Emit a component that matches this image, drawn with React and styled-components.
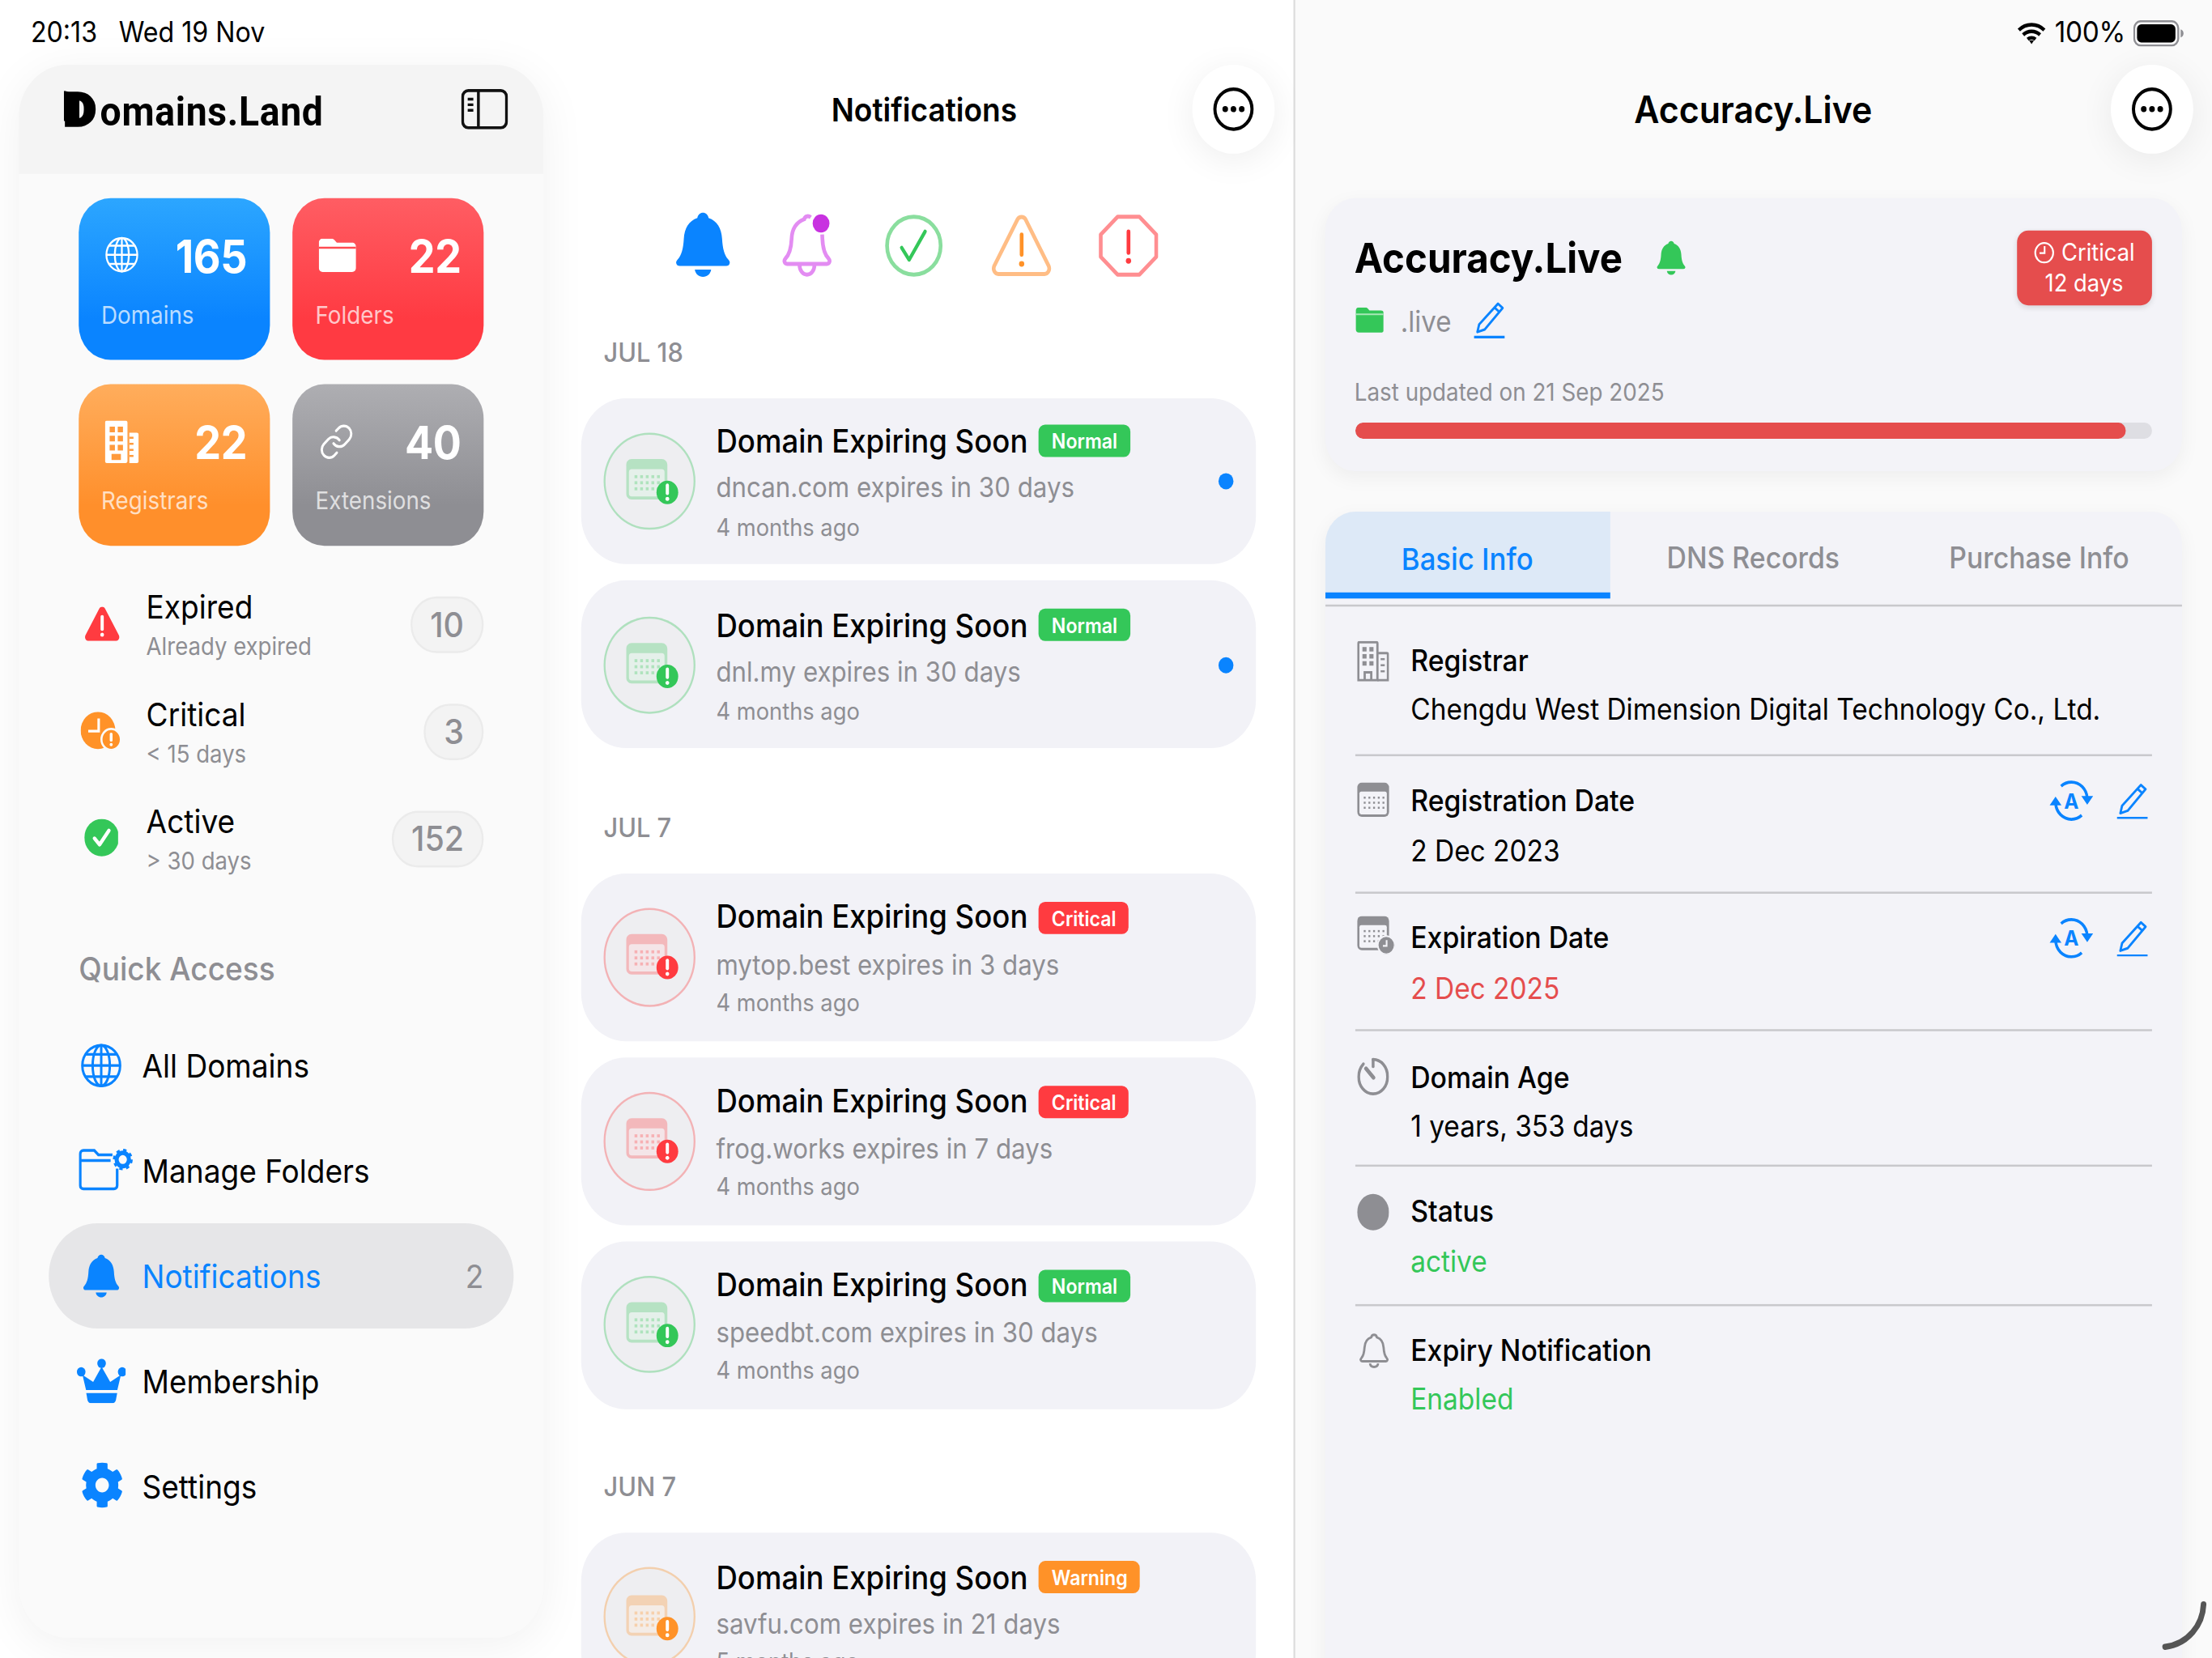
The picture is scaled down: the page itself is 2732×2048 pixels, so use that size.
import React from "react";
import styled, { createGlobalStyle } from "styled-components";
import { FaCog } from "react-icons/fa";
import { Link as LinkIcon } from "lucide-react";

const Global = createGlobalStyle`
  html, body { margin: 0; padding: 0; width: 2732px; height: 2048px; overflow: hidden; background: #fff; }
  * { box-sizing: border-box; }
  svg { flex-shrink: 0; }
  body { font-family: Inter, "Noto Sans", "Liberation Sans", sans-serif; color: #000; }
`;

const BLUE = "#0a84ff";
const GRAY = "#8e8e93";
const TONES = { Normal: "#34c759", Critical: "#ff3b40", Warning: "#ff9228" };

/* the capture is a 1180x820 point iPad window stretched to the full frame */
const Stage = styled.div`
  position: relative;
  width: 1180px;
  height: 820px;
  overflow: hidden;
  display: flex;
  background: #fff;
  transform: scale(2.31525, 2.49756);
  transform-origin: 0 0;
`;

const StatusBar = styled.div`
  position: absolute;
  inset: 0 0 auto 0;
  height: 32px;
  padding: 0 15px 0 16.4px;
  display: flex;
  align-items: center;
  justify-content: space-between;
  font-size: 13.9px;
  z-index: 5;
`;
const StatusGroup = styled.div`
  display: flex;
  align-items: center;
  gap: ${(p) => p.$gap || 12}px;
`;
const BatteryText = styled.span`
  margin-top: -1.2px;
  font-size: 14.4px;
  letter-spacing: -0.1px;
`;

const Side = styled.div`
  width: 290px;
  flex-shrink: 0;
  padding: 32px 0 10px 10px;
  display: flex;
`;
const Panel = styled.aside`
  flex: 1;
  background: #fafafa;
  border-radius: 26px;
  box-shadow: 0 4px 24px rgba(0, 0, 0, 0.06);
  overflow: hidden;
`;
const PanelHead = styled.div`
  height: 54px;
  padding: 0 19px 10px 24px;
  background: #f4f4f4;
  display: flex;
  align-items: center;
  justify-content: space-between;
`;
const Logo = styled.div`
  display: flex;
  align-items: baseline;
  font-family: Roboto, "Liberation Sans", sans-serif;
  font-weight: 700;
  font-size: 20px;
  letter-spacing: 0.3px;
`;
const LogoD = styled.span`
  position: relative;
  display: inline-block;
  width: 19.4px;
  font-weight: 900;
  font-size: 22px;
  -webkit-text-stroke: 1.4px #000;
  transform: scaleX(1.2);
  transform-origin: left center;
  &::before {
    content: "";
    position: absolute;
    left: 0;
    top: 3px;
    width: 7px;
    height: 15.5px;
    background: #000;
    clip-path: polygon(0 0, 100% 22%, 100% 100%, 0 100%);
  }
`;

const StatGrid = styled.div`
  margin: 12px 32px 0;
  display: grid;
  grid-template-columns: 1fr 1fr;
  gap: 12px 12.5px;
`;
const StatCard = styled.div`
  height: 80px;
  padding: 16.3px 12px 0;
  border-radius: 17px;
  color: #fff;
  background: linear-gradient(180deg, ${(p) => p.$from}, ${(p) => p.$to} 75%);
`;
const StatTop = styled.div`
  height: 24px;
  padding-left: 2px;
  display: flex;
  align-items: center;
  justify-content: space-between;
`;
const StatValue = styled.div`
  font-size: 22.5px;
  font-weight: 700;
  letter-spacing: -0.2px;
`;
const StatLabel = styled.div`
  margin-top: 9.7px;
  font-size: 12px;
  line-height: 16px;
  color: rgba(255, 255, 255, 0.72);
`;

const HealthList = styled.div`
  margin: 12px 32px 0;
`;
const HealthRow = styled.div`
  height: 53px;
  display: flex;
  align-items: center;
`;
const HealthIcon = styled.div`
  width: 24px;
  margin-right: 12px;
  display: flex;
  justify-content: center;
`;
const HealthText = styled.div`
  flex: 1;
  padding-top: 1.4px;
`;
const HealthTitle = styled.div`
  font-size: 16px;
  line-height: 20px;
`;
const HealthSub = styled.div`
  margin-top: 1.2px;
  font-size: 11.9px;
  line-height: 18px;
  color: ${GRAY};
`;
const CountPill = styled.div`
  min-width: 31px;
  height: 28px;
  padding: 0 9.5px;
  border-radius: 14px;
  background: #f3f3f3;
  border: 1px solid #ebebeb;
  display: flex;
  align-items: center;
  justify-content: center;
  font-size: 17px;
  font-weight: 500;
  color: ${GRAY};
`;

const SectionLabel = styled.div`
  margin: 25.6px 32px 10.4px;
  font-size: 16px;
  line-height: 24px;
  font-weight: 500;
  color: ${GRAY};
`;
const NavList = styled.nav`
  margin: 0 16px;
`;
const NavItem = styled.div`
  height: 52px;
  padding: 0 16px;
  border-radius: 26px;
  display: flex;
  align-items: center;
  background: ${(p) => (p.$active ? "#e6e6e8" : "transparent")};
  color: ${(p) => (p.$active ? BLUE : "#000")};
`;
const NavIcon = styled.div`
  width: 24px;
  margin-right: 9.8px;
  display: flex;
  justify-content: center;
  flex-shrink: 0;
`;
const NavText = styled.div`
  flex: 1;
  font-size: 16px;
`;
const NavCount = styled.div`
  font-size: 16px;
  color: ${GRAY};
`;

const Middle = styled.main`
  width: 401px;
  flex-shrink: 0;
  padding: 32px 20.5px 0 20px;
  border-right: 1px solid #dcdcdc;
`;
const NavBar = styled.div`
  height: 44px;
  margin: ${(p) => p.$margin || 0};
  display: grid;
  grid-template-columns: 44px 1fr 44px;
  align-items: center;
`;
const NavTitle = styled.div`
  grid-column: 2;
  text-align: center;
  font-size: ${(p) => p.$size || 16}px;
  font-weight: 600;
`;
const RoundButton = styled.div`
  grid-column: 3;
  width: 44px;
  height: 44px;
  border-radius: 50%;
  background: #fff;
  box-shadow: 0 3px 18px rgba(0, 0, 0, 0.07);
  display: flex;
  align-items: center;
  justify-content: center;
`;
const FilterRow = styled.div`
  margin-top: 29px;
  padding-right: 4px;
  display: flex;
  justify-content: center;
  gap: 25px;
`;
const FilterItem = styled.div`
  width: 32px;
  height: 32px;
  display: flex;
  align-items: center;
  justify-content: center;
  &:first-child svg {
    margin-left: 3px;
  }
`;
const DateLabel = styled.div`
  height: 44px;
  margin-top: ${(p) => p.$top}px;
  padding-left: 12px;
  line-height: 43.6px;
  font-size: 13.3px;
  font-weight: 500;
  color: ${GRAY};
`;
const NoteList = styled.div`
  display: flex;
  flex-direction: column;
  gap: 8.4px;
`;
const NoteCard = styled.div`
  height: 82.6px;
  padding: 0 12px 0 11.5px;
  border-radius: 24px;
  background: #f2f2f7;
  display: flex;
  align-items: center;
  gap: 11.5px;
`;
const NoteRing = styled.div`
  width: 49px;
  height: 48.5px;
  border-radius: 50%;
  border: 1px solid ${(p) => p.$tone}55;
  background: #eeeef1;
  flex-shrink: 0;
  display: flex;
  align-items: center;
  justify-content: center;
`;
const NoteBody = styled.div`
  flex: 1;
  padding-top: 3.4px;
`;
const NoteHead = styled.div`
  display: flex;
  align-items: center;
  gap: 6px;
  height: 20px;
`;
const NoteTitle = styled.div`
  font-size: 15.8px;
  font-weight: 500;
`;
const ToneTag = styled.div`
  height: 16px;
  padding: 0 6.7px;
  border-radius: 3.5px;
  background: ${(p) => p.$tone};
  color: #fff;
  font-size: 10px;
  font-weight: 600;
  line-height: 16px;
`;
const NoteText = styled.div`
  margin-top: 3.8px;
  font-size: 13.5px;
  line-height: 19px;
  color: ${GRAY};
`;
const NoteTime = styled.div`
  margin-top: 0.6px;
  font-size: 11.8px;
  line-height: 19px;
  color: ${GRAY};
`;
const UnreadDot = styled.div`
  width: 8px;
  height: 8px;
  border-radius: 50%;
  background: ${BLUE};
`;

const Detail = styled.section`
  flex: 1;
  background: #fafafa;
  padding: 32px 16px 0 15.5px;
`;
const Card = styled.div`
  background: #f3f3f8;
  border-radius: 16px;
  box-shadow: 0 3px 10px rgba(0, 0, 0, 0.05);
  overflow: hidden;
`;
const SummaryCard = styled(Card)`
  height: 135px;
  padding: 15.4px 16px 0;
  position: relative;
`;
const SummaryTitle = styled.div`
  display: flex;
  align-items: center;
  gap: 16px;
  height: 28px;
  font-size: 20.5px;
  font-weight: 700;
`;
const SummaryMeta = styled.div`
  margin-top: 3.9px;
  height: 26px;
  display: flex;
  align-items: center;
  font-size: 14.3px;
  color: ${GRAY};
`;
const MetaText = styled.span`
  margin: 0 12px 0 9px;
`;
const UpdatedText = styled.div`
  margin-top: 13.7px;
  font-size: 12px;
  line-height: 18px;
  color: ${GRAY};
`;
const Track = styled.div`
  margin-top: 5.6px;
  height: 8px;
  border-radius: 4px;
  background: #dedee3;
  overflow: hidden;
`;
const TrackFill = styled.div`
  height: 100%;
  border-radius: 4px;
  background: #e54d4d;
`;
const UrgencyBadge = styled.div`
  position: absolute;
  top: 16px;
  right: 16px;
  width: 72.5px;
  height: 37px;
  border-radius: 6px;
  background: #e54d4d;
  box-shadow: 0 1px 3px rgba(0, 0, 0, 0.12);
  color: #fff;
  font-size: 11.8px;
  line-height: 15.6px;
  text-align: center;
  padding-top: 3.6px;
`;
const BadgeLine = styled.div`
  display: flex;
  align-items: center;
  justify-content: center;
  gap: 4px;
`;
const InfoCard = styled(Card)`
  margin-top: 20px;
  height: 640px;
`;
const Tabs = styled.div`
  height: 46.5px;
  display: grid;
  grid-template-columns: repeat(3, 1fr);
  align-items: start;
  border-bottom: 1px solid #c8c8cc;
`;
const Tab = styled.div`
  height: 43px;
  line-height: 47px;
  text-align: center;
  font-size: ${(p) => (p.$active ? 15 : 14.6)}px;
  font-weight: 500;
  color: ${(p) => (p.$active ? BLUE : GRAY)};
  background: ${(p) => (p.$active ? "#dde9f7" : "transparent")};
  border-bottom: ${(p) => (p.$active ? `3px solid ${BLUE}` : "none")};
`;
const InfoList = styled.div`
  padding: 0 16px;
`;
const InfoRow = styled.div`
  display: grid;
  grid-template-columns: 30px 1fr auto;
  height: 68.1px;
  padding-top: 10.4px;
  border-bottom: 1px solid ${(p) => (p.$last ? "transparent" : "#c8c8cc")};
  &:first-child {
    height: 74.5px;
    padding-top: 15px;
  }
  &:nth-child(4) {
    height: 67.3px;
  }
  &:nth-child(5) {
    padding-top: 9.8px;
  }
`;
const InfoIcon = styled.div`
  height: 24px;
  padding-left: 1.4px;
  display: flex;
  align-items: center;
`;
const InfoLabel = styled.div`
  font-size: 14.6px;
  line-height: 24.5px;
  font-weight: 500;
`;
const InfoValue = styled.div`
  font-size: 14.45px;
  line-height: 24.5px;
  color: ${(p) => p.$color || "#000"};
`;
const InfoActions = styled.div`
  height: 23px;
  padding-right: 2px;
  display: flex;
  align-items: center;
  gap: 11.7px;
`;
const ResizeGrip = styled.svg`
  position: absolute;
  right: 3px;
  bottom: 4px;
`;

const BELL = "M12 1.5c1 0 1.8.7 2 1.7 3 .9 4.6 3.5 4.8 6.8.2 3.4.8 5.4 2.2 6.9.5.5.7 1 .4 1.5-.2.4-.6.6-1.1.6H3.7c-.5 0-.9-.2-1.1-.6-.3-.5-.1-1 .4-1.5 1.4-1.5 2-3.5 2.2-6.9.2-3.3 1.8-5.9 4.8-6.8.2-1 1-1.7 2-1.7z";
const CLAPPER = "M9.1 20.2h5.8c-.2 1.4-1.4 2.4-2.9 2.4s-2.7-1-2.9-2.4z";

const BellFill = ({ size = 24, color = BLUE }) => (
  <svg width={size} height={size} viewBox="0 0 24 24" fill={color}>
    <path d={BELL} />
    <path d={CLAPPER} />
  </svg>
);
const BellLine = ({ size = 18, color = GRAY }) => (
  <svg width={size} height={size} viewBox="0 0 24 24" fill="none" stroke={color} strokeWidth="1.6">
    <path d={BELL} />
    <path d="M9.1 20.4c.2 1.4 1.4 2.3 2.9 2.3s2.7-.9 2.9-2.3" />
  </svg>
);
const Globe = ({ size = 18, color = "#fff", w = 1.3 }) => (
  <svg width={size} height={size} viewBox="0 0 24 24" fill="none" stroke={color} strokeWidth={w}>
    <circle cx="12" cy="12" r="11" />
    <ellipse cx="12" cy="12" rx="5" ry="11" />
    <path d="M12 1v22M1 12h22M3 6h18M3 18h18" />
  </svg>
);
const FolderFill = ({ w = 20, h = 16.5, color = "#fff", line = "#ff4b52" }) => (
  <svg width={w} height={h} viewBox="0 0 24 20">
    <path d="M2.5 0h5.6c.9 0 1.4.3 2 .9L11.6 2.4h9.9c1.5 0 2.5 1 2.5 2.5v12.6c0 1.5-1 2.5-2.5 2.5h-19C1 20 0 19 0 17.5V2.5C0 1 1 0 2.5 0z" fill={color} />
    <path d="M0 5.5h24" stroke={line} strokeWidth="1.2" />
  </svg>
);
const BuildingFill = () => (
  <svg width="18" height="21" viewBox="0 0 18 21" fill="#fff">
    <path d="M1 0h10c.6 0 1 .4 1 1v19c0 .6-.4 1-1 1H1c-.6 0-1-.4-1-1V1c0-.6.4-1 1-1z" />
    <path d="M13 6h4c.6 0 1 .4 1 1v13c0 .6-.4 1-1 1h-4z" />
    <g fill="#ff9a3c">
      {[3, 7.5, 12].map((y) => [2.5, 6.8].map((x) => <rect key={`${x}-${y}`} x={x} y={y} width="2.8" height="2.8" />))}
      <rect x="3.5" y="16.5" width="5" height="3" />
      {[8, 11, 14, 17].map((y) => <rect key={y} x="13" y={y} width="2.2" height="1" />)}
    </g>
  </svg>
);
const Warning = () => (
  <svg width="19" height="17" viewBox="0 0 24 22">
    <path d="M10 1.3c.9-1.6 3.1-1.6 4 0l9.5 17c.9 1.6-.2 3.7-2 3.7h-19c-1.8 0-2.9-2.1-2-3.7z" fill={TONES.Critical} />
    <path d="M12 6.5v8" stroke="#fff" strokeWidth="2.2" strokeLinecap="round" />
    <circle cx="12" cy="18" r="1.3" fill="#fff" />
  </svg>
);
const ClockAlert = () => (
  <svg width="21.5" height="18.5" viewBox="0 0 29 25">
    <circle cx="12.5" cy="12.5" r="12.5" fill={TONES.Warning} />
    <path d="M13 4.5V13H5.5" fill="none" stroke="#fff" strokeWidth="1.8" />
    <circle cx="22" cy="18.5" r="7" fill={TONES.Warning} stroke="#fafafa" strokeWidth="1.5" />
    <path d="M22 15v4" stroke="#fff" strokeWidth="2" strokeLinecap="round" />
    <circle cx="22" cy="22" r="1.1" fill="#fff" />
  </svg>
);
const CheckDot = () => (
  <svg width="18.5" height="18.5" viewBox="0 0 24 24">
    <circle cx="12" cy="12" r="12" fill={TONES.Normal} />
    <path d="M7 12.5l3.5 4L17 7.5" fill="none" stroke="#fff" strokeWidth="2.4" strokeLinecap="round" strokeLinejoin="round" />
  </svg>
);
const SidebarToggle = () => (
  <svg width="25" height="20" viewBox="0 0 25 20" fill="none" stroke="#111" strokeWidth="1.5">
    <rect x="0.8" y="0.8" width="23.4" height="18.4" rx="3" />
    <path d="M9.2 1v18" />
    <path d="M3.5 5h3M3.5 7.8h3M3.5 10.6h3" strokeWidth="1.4" />
  </svg>
);
const FolderGear = () => (
  <svg width="29" height="21" viewBox="0 0 29 21" fill="none" stroke={BLUE} strokeWidth="1.4" style={{ marginLeft: 5 }}>
    <path d="M18 3.2h-7.5L8.3 1H2.5C1.5 1 .8 1.7 .8 2.7v15.6c0 1 .7 1.7 1.7 1.7h16.3c1 0 1.7-.7 1.7-1.7V10" />
    <path d="M1 6h16" />
    <circle cx="23.5" cy="5.5" r="3.3" strokeWidth="2.2" />
    <circle cx="23.5" cy="5.5" r="4.7" strokeWidth="1.2" strokeDasharray="1.8 1.9" />
  </svg>
);
const Crown = () => (
  <svg width="26.5" height="22" viewBox="0 0 26.5 22" fill={BLUE}>
    <circle cx="13.2" cy="2.3" r="2.3" />
    <circle cx="2.3" cy="6.5" r="2.3" />
    <circle cx="24.2" cy="6.5" r="2.3" />
    <path d="M13.2 4l4.6 7.5L23.5 8l-1.9 7.5H4.9L3 8l5.7 3.5z" />
    <path d="M5 17h16.5l-.7 3.5c-.2.9-.9 1.5-1.8 1.5H7.5c-.9 0-1.6-.6-1.8-1.5z" />
  </svg>
);
const Ellipsis = () => (
  <svg width="22" height="22" viewBox="0 0 22 22">
    <circle cx="11" cy="11" r="9.9" fill="none" stroke="#000" strokeWidth="1.7" />
    <circle cx="6.6" cy="11" r="1.5" />
    <circle cx="11" cy="11" r="1.5" />
    <circle cx="15.4" cy="11" r="1.5" />
  </svg>
);
const BellDot = () => (
  <svg width="31" height="32" viewBox="0 0 30 32" fill="none" stroke="#e38cf2" strokeWidth="2">
    <path d="M17 2.5c-1-.8-3-.9-3.5.9C9 5 7 8.5 6.8 13c-.2 4.5-1 7.8-3.4 10-.8.8-.5 2.5 1 2.500h21.200c1.500 0 1.800-1.700 1-2.500-2.400-2.200-3.200-5.500-3.400-10l-.1-2" />
    <path d="M11 25.8c0 3 1.8 5 4 5s4-2 4-5" />
    <circle cx="22.5" cy="5.5" r="4.5" fill="#c832e0" stroke="none" />
  </svg>
);
const CheckRing = () => (
  <svg width="31" height="31" viewBox="0 0 31 31" fill="none">
    <circle cx="15.5" cy="15.5" r="14.3" stroke="#8ade9e" strokeWidth="2" />
    <path d="M9 16.5l4 6 8.5-14" stroke={TONES.Normal} strokeWidth="1.8" strokeLinecap="round" strokeLinejoin="round" />
  </svg>
);
const TriangleLine = () => (
  <svg width="32" height="31" viewBox="0 0 32 31" fill="none">
    <path d="M13.8 2.5c1-1.6 3.3-1.6 4.3 0l12.3 23c.9 1.8-.3 4-2.2 4H3.6c-1.9 0-3.1-2.2-2.2-4z" stroke="#ffbd85" strokeWidth="2" />
    <path d="M16 10v10" stroke={TONES.Warning} strokeWidth="2" strokeLinecap="round" />
    <circle cx="16" cy="24.5" r="1.4" fill={TONES.Warning} />
  </svg>
);
const OctagonLine = () => (
  <svg width="32" height="31" viewBox="0 0 32 31" fill="none">
    <path d="M10.2 1.2h11.6l9 8.8v11l-9 8.8H10.2l-9-8.8V10z" stroke="#ff8e91" strokeWidth="2" strokeLinejoin="round" />
    <path d="M16 8.5V19" stroke={TONES.Critical} strokeWidth="2" strokeLinecap="round" />
    <circle cx="16" cy="23" r="1.4" fill={TONES.Critical} />
  </svg>
);
const NoteGlyph = ({ tone }) => (
  <svg width="30" height="28" viewBox="0 0 30 28" style={{ marginLeft: 5, marginTop: 4 }}>
    <path d="M3 1h16c1.7 0 3 1.3 3 3v14c0 1.7-1.3 3-3 3H3c-1.7 0-3-1.3-3-3V4c0-1.7 1.3-3 3-3z" fill={tone} opacity="0.3" />
    <rect x="1.5" y="6" width="19" height="13.5" rx="1.5" fill="#f4f4f7" opacity="0.75" />
    <g fill={tone} opacity="0.3">
      {[9, 12, 15].map((y) => [4.5, 7.5, 10.5, 13.5, 16.5].map((x) => (
        <rect key={`${x}-${y}`} x={x} y={y} width="1.5" height="1.5" />
      )))}
    </g>
    <circle cx="22" cy="17.5" r="5.8" fill={tone} />
    <path d="M22 14v4" stroke="#fff" strokeWidth="1.7" strokeLinecap="round" />
    <circle cx="22" cy="20.7" r="1" fill="#fff" />
  </svg>
);
const Pencil = ({ size = 17, color = BLUE }) => (
  <svg width={size} height={size * 1.1} viewBox="0 0 24 26" fill="none" stroke={color} strokeWidth="1.7" strokeLinejoin="round">
    <path d="M18.5 1.5l3.5 3L8.5 19.5 3 21.3 4.3 16z" />
    <path d="M16 4.3l3.600 3" />
    <path d="M0.5 24.8h23" strokeWidth="1.9" />
  </svg>
);
const AutoRenew = () => (
  <svg width="24" height="20" viewBox="0 0 24 20" fill="none" stroke={BLUE} strokeWidth="1.5">
    <path d="M6.5 2.8C8 1.5 10 .8 12 .8c4.5 0 8 3.4 8.4 7.7" />
    <path d="M17.5 17.2c-1.5 1.3-3.5 2-5.5 2-4.5 0-8-3.4-8.4-7.7" />
    <path d="M17.3 7.7h6.3l-3.15 4.3zM.4 12.3h6.3L3.55 8z" fill={BLUE} stroke="none" />
    <text x="12" y="13.8" textAnchor="middle" fontSize="10.5" fontWeight="700" fill={BLUE} stroke="none" fontFamily="Inter, sans-serif">A</text>
  </svg>
);
const Building = () => (
  <svg width="17" height="20" viewBox="0 0 17 20" fill="none" stroke={GRAY} strokeWidth="1.2">
    <path d="M1.2 .6h9c.4 0 .6.2.6.6v18.2H.6V1.2c0-.4.2-.6.6-.6z" />
    <path d="M10.8 6h5c.4 0 .6.2.6.6v12.8h-5.600" />
    <path d="M4 19.4v-3.9h3.5v3.9" />
    <g fill={GRAY} stroke="none">
      {[3, 6.5, 10].map((y) => [2.8, 6.5].map((x) => <rect key={`${x}-${y}`} x={x} y={y} width="2.2" height="2.2" />))}
      {[8.5, 11.5, 14.5].map((y) => <rect key={y} x="12.5" y={y} width="2.2" height="1" />)}
    </g>
  </svg>
);
const CalendarGray = ({ clock }) => (
  <svg width="20" height="19" viewBox="0 0 20 19" style={{ marginTop: clock ? -3 : 0 }}>
    <rect x="0" y="0" width="17" height="17" rx="2.5" fill={GRAY} />
    <rect x="1.2" y="4.5" width="14.6" height="11.3" rx="1" fill="#f3f3f8" />
    <g fill={GRAY}>
      {[7, 9.5, 12].map((y) => [3.5, 6, 8.5, 11, 13.5].map((x) => <rect key={`${x}-${y}`} x={x} y={y} width="1" height="1" />))}
    </g>
    {clock && (
      <>
        <circle cx="15.5" cy="14.5" r="4.5" fill={GRAY} stroke="#f3f3f8" strokeWidth="0.8" />
        <path d="M15.7 12v2.8h-2" fill="none" stroke="#f3f3f8" strokeWidth="0.9" />
      </>
    )}
  </svg>
);
const Timer = () => (
  <svg width="17" height="19" viewBox="0 0 17 19" fill="none" stroke={GRAY} strokeWidth="1.5" strokeLinecap="round">
    <path d="M8.5 1c4.3 0 7.7 3.7 7.7 8.5S12.8 18 8.5 18 .8 14.3 .8 9.500c0-2.500 1-4.700 2.500-6.300" />
    <path d="M8.5 1v3.5" />
    <path d="M4.7 5.5l4 4.5" strokeWidth="2" />
  </svg>
);
const Wifi = () => (
  <svg width="15.5" height="11" viewBox="0 0 16 11.5" fill="none" stroke="#000" strokeWidth="1.9">
    <path d="M.9 4C4.8.3 11.2.3 15.1 4" />
    <path d="M3.3 6.5c2.6-2.4 6.8-2.4 9.4 0" />
    <path d="M5.8 8.8c1.3-1 3.1-1 4.4 0" />
    <path d="M6.6 9.3h2.8L8 11.3z" fill="#000" stroke="none" />
  </svg>
);
const Battery = () => (
  <svg width="27" height="13" viewBox="0 0 27 13">
    <rect x="0.5" y="0.5" width="23.5" height="12" rx="3.5" fill="none" stroke="#8e8e93" />
    <rect x="2" y="2" width="20.5" height="9" rx="2.3" />
    <path d="M25.3 4.5c.9.3 1.5 1 1.5 2s-.6 1.7-1.5 2z" fill="#8e8e93" />
  </svg>
);
const SmallClock = () => (
  <svg width="11" height="12" viewBox="0 0 11 12" fill="none" stroke="#fff" strokeWidth="0.9">
    <circle cx="5.5" cy="6" r="4.8" />
    <path d="M5.7 2.7v3.5H3" />
  </svg>
);

const stats = [
  { label: "Domains", value: 165, from: "#2ca6ff", to: "#0a84ff", icon: <Globe /> },
  { label: "Folders", value: 22, from: "#ff5d63", to: "#ff3a42", icon: <FolderFill /> },
  { label: "Registrars", value: 22, from: "#ffad5c", to: "#ff8f2b", icon: <BuildingFill /> },
  { label: "Extensions", value: 40, from: "#aeaeb2", to: "#8e8e93", icon: <LinkIcon size={19} strokeWidth={1.6} /> },
];
const health = [
  { title: "Expired", sub: "Already expired", count: 10, icon: <Warning /> },
  { title: "Critical", sub: "< 15 days", count: 3, icon: <ClockAlert /> },
  { title: "Active", sub: "> 30 days", count: 152, icon: <CheckDot /> },
];
const nav = [
  { label: "All Domains", icon: <Globe size={22} color={BLUE} w={1.4} /> },
  { label: "Manage Folders", icon: <FolderGear /> },
  { label: "Notifications", icon: <BellFill />, active: true, count: 2 },
  { label: "Membership", icon: <Crown /> },
  { label: "Settings", icon: <FaCog size={23} color={BLUE} /> },
];
const groups = [
  {
    date: "JUL 18",
    top: 15.5,
    items: [
      { tone: "Normal", text: "dncan.com expires in 30 days", unread: true },
      { tone: "Normal", text: "dnl.my expires in 30 days", unread: true },
    ],
  },
  {
    date: "JUL 7",
    top: 17.9,
    items: [
      { tone: "Critical", text: "mytop.best expires in 3 days" },
      { tone: "Critical", text: "frog.works expires in 7 days" },
      { tone: "Normal", text: "speedbt.com expires in 30 days" },
    ],
  },
  {
    date: "JUN 7",
    top: 17.7,
    items: [{ tone: "Warning", text: "savfu.com expires in 21 days", time: "5 months ago" }],
  },
];
const info = [
  { label: "Registrar", value: "Chengdu West Dimension Digital Technology Co., Ltd.", icon: <Building /> },
  { label: "Registration Date", value: "2 Dec 2023", icon: <CalendarGray />, actions: true },
  { label: "Expiration Date", value: "2 Dec 2025", color: "#e54d4d", icon: <CalendarGray clock />, actions: true },
  { label: "Domain Age", value: "1 years, 353 days", icon: <Timer /> },
  { label: "Status", value: "active", color: TONES.Normal, icon: <svg width="17" height="19"><ellipse cx="8.5" cy="9.5" rx="8.5" ry="9" fill={GRAY} /></svg> },
  { label: "Expiry Notification", value: "Enabled", color: TONES.Normal, icon: <BellLine /> },
];

export default function App() {
  return (
    <>
      <Global />
      <Stage>
        <StatusBar>
          <StatusGroup $gap={11.5}>
            <span>20:13</span>
            <span>Wed 19 Nov</span>
          </StatusGroup>
          <StatusGroup $gap={4.2}>
            <Wifi />
            <BatteryText>100%</BatteryText>
            <Battery />
          </StatusGroup>
        </StatusBar>

        <Side>
          <Panel>
            <PanelHead>
              <Logo>
                <LogoD>D</LogoD>omains.Land
              </Logo>
              <SidebarToggle />
            </PanelHead>
            <StatGrid>
              {stats.map((s) => (
                <StatCard key={s.label} $from={s.from} $to={s.to}>
                  <StatTop>
                    {s.icon}
                    <StatValue>{s.value}</StatValue>
                  </StatTop>
                  <StatLabel>{s.label}</StatLabel>
                </StatCard>
              ))}
            </StatGrid>
            <HealthList>
              {health.map((h) => (
                <HealthRow key={h.title}>
                  <HealthIcon>{h.icon}</HealthIcon>
                  <HealthText>
                    <HealthTitle>{h.title}</HealthTitle>
                    <HealthSub>{h.sub}</HealthSub>
                  </HealthText>
                  <CountPill>{h.count}</CountPill>
                </HealthRow>
              ))}
            </HealthList>
            <SectionLabel>Quick Access</SectionLabel>
            <NavList>
              {nav.map((n) => (
                <NavItem key={n.label} $active={n.active}>
                  <NavIcon>{n.icon}</NavIcon>
                  <NavText>{n.label}</NavText>
                  {n.count && <NavCount>{n.count}</NavCount>}
                </NavItem>
              ))}
            </NavList>
          </Panel>
        </Side>

        <Middle>
          <NavBar $margin="0 -10.5px 0 -4px">
            <NavTitle>Notifications</NavTitle>
            <RoundButton>
              <Ellipsis />
            </RoundButton>
          </NavBar>
          <FilterRow>
            <FilterItem><BellFill size={36} /></FilterItem>
            <FilterItem><BellDot /></FilterItem>
            <FilterItem><CheckRing /></FilterItem>
            <FilterItem><TriangleLine /></FilterItem>
            <FilterItem><OctagonLine /></FilterItem>
          </FilterRow>
          {groups.map((g) => (
            <div key={g.date}>
              <DateLabel $top={g.top}>{g.date}</DateLabel>
              <NoteList>
                {g.items.map((n) => (
                  <NoteCard key={n.text}>
                    <NoteRing $tone={TONES[n.tone]}>
                      <NoteGlyph tone={TONES[n.tone]} />
                    </NoteRing>
                    <NoteBody>
                      <NoteHead>
                        <NoteTitle>Domain Expiring Soon</NoteTitle>
                        <ToneTag $tone={TONES[n.tone]}>{n.tone}</ToneTag>
                      </NoteHead>
                      <NoteText>{n.text}</NoteText>
                      <NoteTime>{n.time || "4 months ago"}</NoteTime>
                    </NoteBody>
                    {n.unread && <UnreadDot />}
                  </NoteCard>
                ))}
              </NoteList>
            </div>
          ))}
        </Middle>

        <Detail>
          <NavBar $margin="0 -6px 22px -6px">
            <NavTitle $size={18.5}>Accuracy.Live</NavTitle>
            <RoundButton>
              <Ellipsis />
            </RoundButton>
          </NavBar>
          <SummaryCard>
            <SummaryTitle>
              Accuracy.Live
              <BellFill size={19} color={TONES.Normal} />
            </SummaryTitle>
            <SummaryMeta>
              <FolderFill w={15.6} h={12.5} color={TONES.Normal} line="#a8e8b8" />
              <MetaText>.live</MetaText>
              <Pencil />
            </SummaryMeta>
            <UpdatedText>Last updated on 21 Sep 2025</UpdatedText>
            <Track>
              <TrackFill style={{ width: "96.7%" }} />
            </Track>
            <UrgencyBadge>
              <BadgeLine>
                <SmallClock />
                Critical
              </BadgeLine>
              12 days
            </UrgencyBadge>
          </SummaryCard>
          <InfoCard>
            <Tabs>
              <Tab $active>Basic Info</Tab>
              <Tab>DNS Records</Tab>
              <Tab>Purchase Info</Tab>
            </Tabs>
            <InfoList>
              {info.map((r, i) => (
                <InfoRow key={r.label} $last={i === info.length - 1}>
                  <InfoIcon>{r.icon}</InfoIcon>
                  <div>
                    <InfoLabel>{r.label}</InfoLabel>
                    <InfoValue $color={r.color}>{r.value}</InfoValue>
                  </div>
                  {r.actions && (
                    <InfoActions>
                      <AutoRenew />
                      <Pencil />
                    </InfoActions>
                  )}
                </InfoRow>
              ))}
            </InfoList>
          </InfoCard>
        </Detail>

        <ResizeGrip width="24" height="24" viewBox="0 0 24 24" fill="none">
          <path d="M22.5 1.5c-.5 10-8 19.5-20.5 21" stroke="#555" strokeWidth="3" strokeLinecap="round" />
        </ResizeGrip>
      </Stage>
    </>
  );
}
